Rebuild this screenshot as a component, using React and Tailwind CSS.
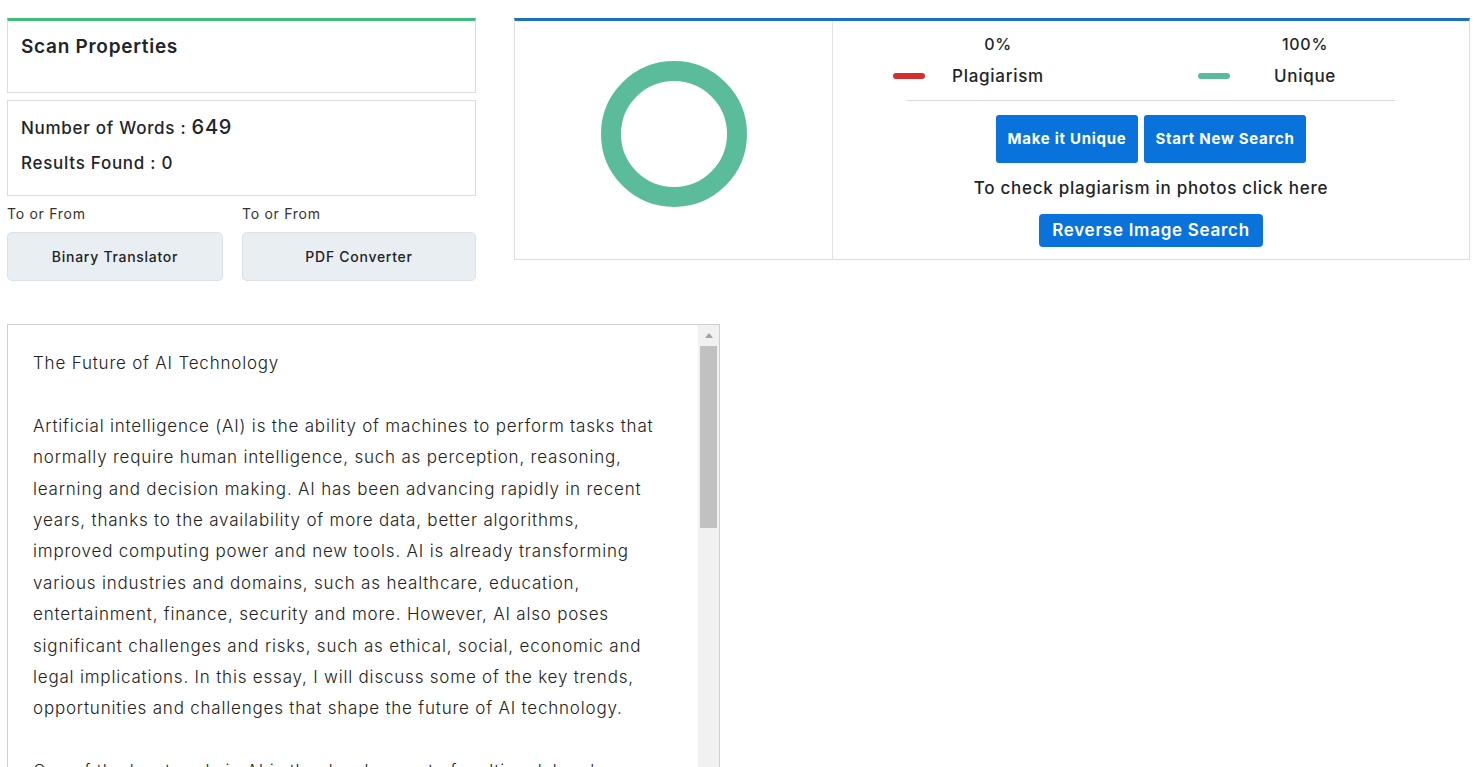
import React from 'react';

const essay = [
  'The Future of AI Technology',
  '',
  'Artificial intelligence (AI) is the ability of machines to perform tasks that',
  'normally require human intelligence, such as perception, reasoning,',
  'learning and decision making. AI has been advancing rapidly in recent',
  'years, thanks to the availability of more data, better algorithms,',
  'improved computing power and new tools. AI is already transforming',
  'various industries and domains, such as healthcare, education,',
  'entertainment, finance, security and more. However, AI also poses',
  'significant challenges and risks, such as ethical, social, economic and',
  'legal implications. In this essay, I will discuss some of the key trends,',
  'opportunities and challenges that shape the future of AI technology.',
  '',
  'One of the key trends in AI is the development of multimodal and',
];

const Donut = () => (
  <svg width="146" height="146" viewBox="0 0 146 146">
    <circle cx="73" cy="73" r="63" fill="none" stroke="#5bbc9c" strokeWidth="20" />
  </svg>
);

const Legend = ({ pct, label, color, gap }) => (
  <div className="flex flex-col items-center">
    <div className="text-[16px] font-medium leading-[24px] h-[24px]">{pct}</div>
    <div className="flex items-center mt-[8px]">
      <span className={`block w-[32px] h-[6px] rounded-full ${color}`} />
      <span className={gap} />
      <span className="text-[17px] font-medium leading-[24px]">{label}</span>
      <span className={gap} />
      <span className="block w-[32px]" />
    </div>
  </div>
);

const App = () => {
  return (
    <div className="w-[1480px] h-[767px] overflow-hidden bg-white text-[#212529] tracking-[0.045em] font-['Inter','Open_Sans',sans-serif]">
      <div className="flex items-start pt-[18px] pl-[7px]">
        {/* left column */}
        <div className="w-[469px]">
          <div className="h-[75px] border border-[#dcdcdc] border-t-[3px] border-t-[#3dbd79] px-[13px] pt-[12px]">
            <h2 className="text-[19px] font-semibold leading-[28px]">Scan Properties</h2>
          </div>
          <div className="h-[96px] mt-[7px] border border-[#dcdcdc] px-[13px] pt-[13px]">
            <div className="text-[17px] font-medium leading-[26px]">
              Number of Words : <span className="text-[20px]">649</span>
            </div>
            <div className="text-[17px] font-medium leading-[26px] mt-[9px]">Results Found : 0</div>
          </div>
          <div className="flex gap-[19px] mt-[8px]">
            <div className="w-[216px]">
              <div className="text-[14px] leading-[20px] text-[#333]">To or From</div>
              <button className="mt-[8px] w-full h-[49px] rounded-[5px] bg-[#e9eef3] border border-[#dbe1e7] text-[14px] font-medium text-[#222]">
                Binary Translator
              </button>
            </div>
            <div className="w-[234px]">
              <div className="text-[14px] leading-[20px] text-[#333]">To or From</div>
              <button className="mt-[8px] w-full h-[49px] rounded-[5px] bg-[#e9eef3] border border-[#dbe1e7] text-[14px] font-medium text-[#222]">
                PDF Converter
              </button>
            </div>
          </div>
        </div>

        {/* result panel */}
        <div className="ml-[38px] w-[956px] h-[242px] flex border border-[#dcdcdc] border-t-[3px] border-t-[#1b6fc7]">
          <div className="w-[318px] flex items-center justify-center pb-[12px] border-r border-[#e2e2e2]">
            <Donut />
          </div>
          <div className="flex-1 flex flex-col items-center pt-[11px]">
            <div className="w-full flex">
              <div className="w-1/2 flex justify-center pl-[12px]">
                <Legend pct="0%" label="Plagiarism" color="bg-[#d32f2f]" gap="w-[27px]" />
              </div>
              <div className="w-1/2 flex justify-center pr-[10px]">
                <Legend pct="100%" label="Unique" color="bg-[#5bbc9c]" gap="w-[44px]" />
              </div>
            </div>
            <div className="w-[488px] h-px bg-[#d9d9d9] mt-[12px]" />
            <div className="flex gap-[6px] mt-[14px]">
              <button className="w-[142px] h-[48px] rounded-[3px] bg-[#0a73db] text-white text-[15px] font-bold">Make it Unique</button>
              <button className="w-[162px] h-[48px] rounded-[3px] bg-[#0a73db] text-white text-[15px] font-bold">Start New Search</button>
            </div>
            <div className="text-[17px] font-medium leading-[26px] mt-[12px]">To check plagiarism in photos click here</div>
            <button className="mt-[13px] w-[224px] h-[33px] rounded-[4px] bg-[#0a73db] text-white text-[17px] font-semibold">Reverse Image Search</button>
          </div>
        </div>
      </div>

      {/* text box */}
      <div className="ml-[7px] mt-[43px] w-[713px] h-[480px] border border-[#cfcfcf] flex overflow-hidden">
        <div className="flex-1 pl-[25px] pt-[23px] text-[17px] font-light leading-[31.4px] tracking-[0.8px] text-[#222]">
          {essay.map((line, i) => (
            <div key={i} className="whitespace-nowrap h-[31.4px]">{line}</div>
          ))}
        </div>
        <div className="w-[21px] bg-[#f1f1f1] flex flex-col items-center">
          <div className="h-[21px] flex items-center justify-center">
            <svg width="8" height="5" viewBox="0 0 8 5"><path d="M4 0 L8 5 L0 5 Z" fill="#a3a3a3" /></svg>
          </div>
          <div className="w-[17px] h-[182px] bg-[#c1c1c1]" />
        </div>
      </div>
    </div>
  );
};

export default App;
